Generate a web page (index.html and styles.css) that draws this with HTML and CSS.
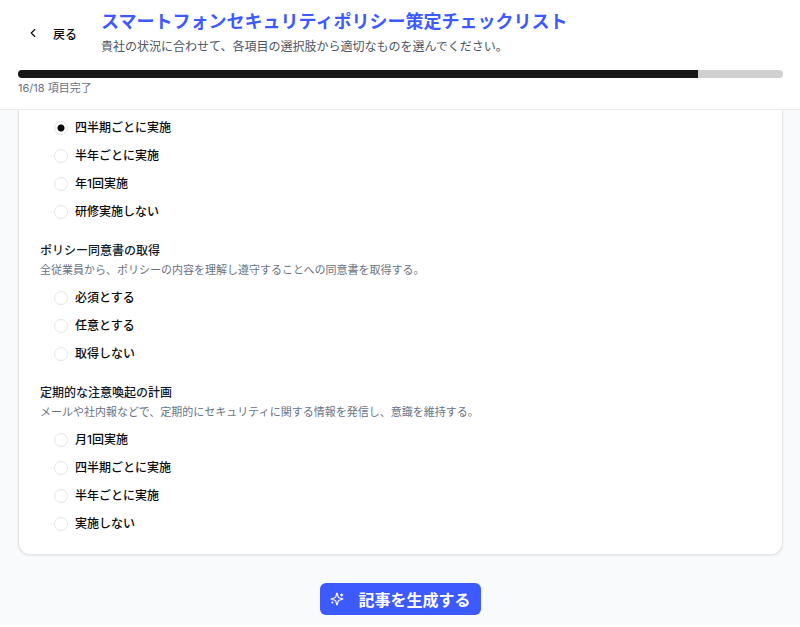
FILE: index.html
```html
<!DOCTYPE html>
<html lang="ja">
<head>
  <meta charset="UTF-8">
  <meta name="viewport" content="width=device-width, initial-scale=1">
  <title>スマートフォンセキュリティポリシー策定チェックリスト</title>
  <link rel="stylesheet" href="styles.css">
</head>
<body>
  <div class="page">
    <header class="header">
      <div class="header-row">
        <button type="button" class="btn-back">
          <svg class="icon" viewBox="0 0 24 24" aria-hidden="true"><path d="m15 18-6-6 6-6"/></svg>
          戻る
        </button>
        <div>
          <h1>スマートフォンセキュリティポリシー策定チェックリスト</h1>
          <p class="lead">貴社の状況に合わせて、各項目の選択肢から適切なものを選んでください。</p>
        </div>
      </div>
      <div class="progress" role="progressbar" aria-valuemin="0" aria-valuemax="18" aria-valuenow="16" aria-labelledby="progress-text">
        <div class="progress-bar" style="width: 88.9%"></div>
      </div>
      <p class="progress-text" id="progress-text">16/18 項目完了</p>
    </header>

    <main class="main">
      <form>
        <div class="card">
          <div class="group">
            <div class="options">
              <label class="option"><input type="radio" name="training" checked>四半期ごとに実施</label>
              <label class="option"><input type="radio" name="training">半年ごとに実施</label>
              <label class="option"><input type="radio" name="training">年1回実施</label>
              <label class="option"><input type="radio" name="training">研修実施しない</label>
            </div>
          </div>

          <div class="group" role="radiogroup" aria-labelledby="consent-title">
            <h3 id="consent-title">ポリシー同意書の取得</h3>
            <p class="desc">全従業員から、ポリシーの内容を理解し遵守することへの同意書を取得する。</p>
            <div class="options">
              <label class="option"><input type="radio" name="consent">必須とする</label>
              <label class="option"><input type="radio" name="consent">任意とする</label>
              <label class="option"><input type="radio" name="consent">取得しない</label>
            </div>
          </div>

          <div class="group" role="radiogroup" aria-labelledby="reminder-title">
            <h3 id="reminder-title">定期的な注意喚起の計画</h3>
            <p class="desc">メールや社内報などで、定期的にセキュリティに関する情報を発信し、意識を維持する。</p>
            <div class="options">
              <label class="option"><input type="radio" name="reminder">月1回実施</label>
              <label class="option"><input type="radio" name="reminder">四半期ごとに実施</label>
              <label class="option"><input type="radio" name="reminder">半年ごとに実施</label>
              <label class="option"><input type="radio" name="reminder">実施しない</label>
            </div>
          </div>
        </div>

        <div class="actions">
          <button type="button" class="btn-generate">
            <svg class="icon" viewBox="0 0 24 24" aria-hidden="true">
              <path d="M9.937 15.5A2 2 0 0 0 8.5 14.063l-6.135-1.582a.5.5 0 0 1 0-.962L8.5 9.936A2 2 0 0 0 9.937 8.5l1.582-6.135a.5.5 0 0 1 .963 0L14.063 8.5A2 2 0 0 0 15.5 9.937l6.135 1.581a.5.5 0 0 1 0 .964L15.5 14.063a2 2 0 0 0-1.437 1.437l-1.582 6.135a.5.5 0 0 1-.963 0z"/>
              <path d="M20 3v4M22 5h-4M4 17v2M5 18H3"/>
            </svg>
            記事を生成する
          </button>
        </div>
      </form>
    </main>
  </div>
</body>
</html>
```

FILE: styles.css
```css
* {
  box-sizing: border-box;
}

body {
  margin: 0;
  background: #fff;
  color: #0a0a0a;
  font-family: Inter, "Noto Sans CJK JP", sans-serif;
  font-size: 12px;
  line-height: 20px;
}

h1, h3, p {
  margin: 0;
}

.page {
  background: #f8fafc;
}

.header {
  background: #fff;
  border-bottom: 1px solid #e9ebee;
  padding: 9px 17px 11px 18px;
}

.header-row {
  display: flex;
  align-items: center;
  gap: 14px;
}

h1 {
  color: #3d5afe;
  font-size: 18px;
  font-weight: 700;
  line-height: 26px;
}

.lead {
  color: #4a5565;
  line-height: 24px;
}

.icon {
  width: 14px;
  height: 14px;
  fill: none;
  stroke: currentColor;
  stroke-width: 2;
  stroke-linecap: round;
  stroke-linejoin: round;
}

button {
  display: inline-flex;
  align-items: center;
  border: 0;
  font-family: inherit;
  font-weight: 500;
  cursor: pointer;
}

.btn-back {
  flex-shrink: 0;
  gap: 13px;
  height: 28px;
  padding: 0 10px 2px 8px;
  background: none;
  color: #0a0a0a;
  font-size: 12px;
}

.progress {
  height: 8px;
  margin-top: 11px;
  overflow: hidden;
  border-radius: 4px;
  background: #d0d0d0;
}

.progress-bar {
  height: 100%;
  background: #171717;
}

.progress-text {
  color: #6a7282;
  font-size: 11px;
}

.main {
  padding: 0 17px 10px 18px;
}

/* the card continues up under the header */
.card {
  padding: 8px 21px 20px;
  background: #fff;
  border: 1px solid #e5e5e5;
  border-top: 0;
  border-radius: 0 0 12px 12px;
  box-shadow: 0 1px 2px rgba(0, 0, 0, 0.08);
}

.group + .group {
  margin-top: 19px;
}

h3 {
  color: #101828;
  font-size: 12px;
  font-weight: 500;
}

.desc {
  margin: 1px 0 10px;
  color: #6a7282;
  font-size: 11px;
  line-height: 16px;
}

.options {
  display: flex;
  flex-direction: column;
  align-items: flex-start;
  gap: 8px;
  padding-left: 14px;
}

.option {
  display: flex;
  align-items: center;
  gap: 7px;
  font-weight: 500;
}

.option input {
  appearance: none;
  width: 14px;
  height: 14px;
  margin: 0;
  border: 1px solid #e5e5e5;
  border-radius: 50%;
  background: #fff;
}

.option input:checked {
  background: radial-gradient(circle, #0a0a0a 3px, #fff 4px);
}

.actions {
  display: flex;
  justify-content: center;
  margin-top: 28px;
}

.btn-generate {
  gap: 14px;
  height: 32px;
  padding: 0 10px 1px;
  border-radius: 6px;
  background: #3d5afe;
  color: #fff;
  font-size: 16px;
  font-weight: 600;
}
```
